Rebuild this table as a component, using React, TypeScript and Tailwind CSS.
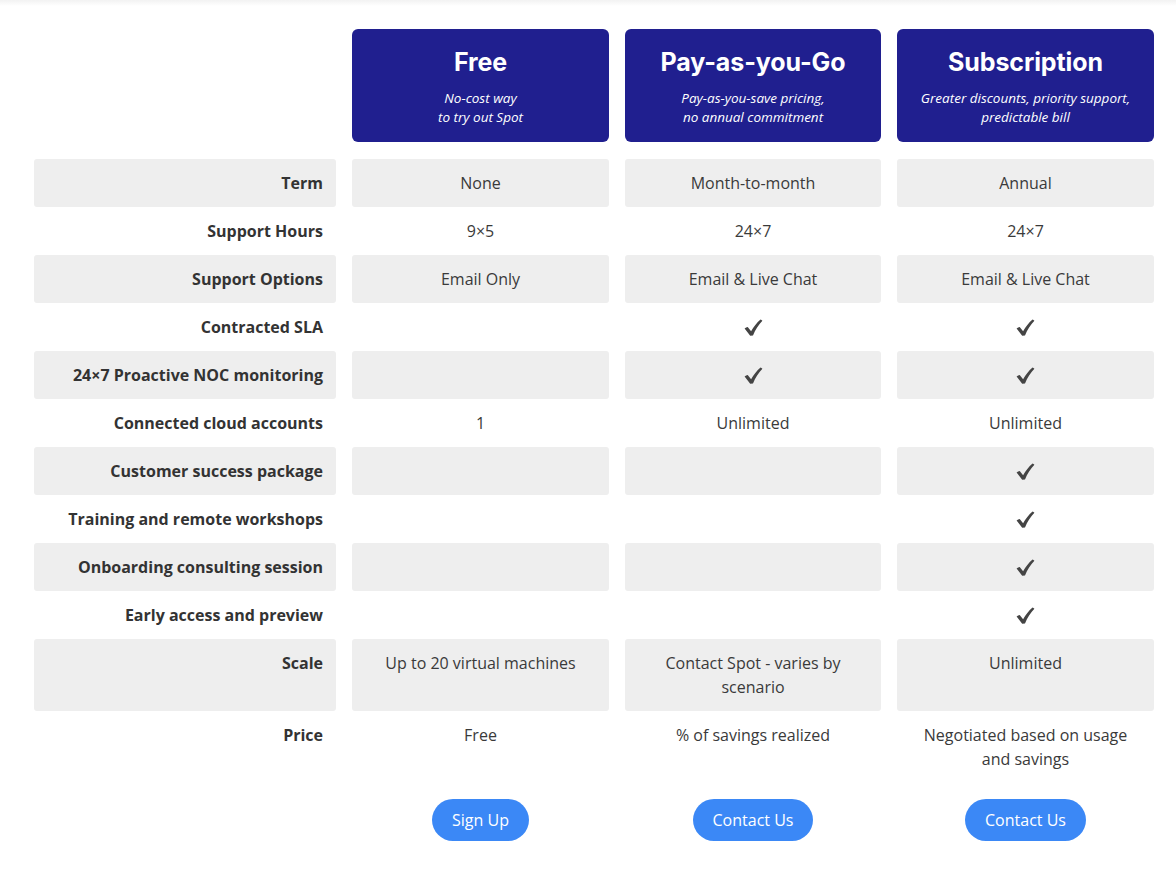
import React from "react";

type Cell = string | boolean;
type Row = { label: string; cells: Cell[]; tall?: boolean };

const rows: Row[] = [
  { label: "Term", cells: ["None", "Month-to-month", "Annual"] },
  { label: "Support Hours", cells: ["9×5", "24×7", "24×7"] },
  { label: "Support Options", cells: ["Email Only", "Email & Live Chat", "Email & Live Chat"] },
  { label: "Contracted SLA", cells: ["", true, true] },
  { label: "24×7 Proactive NOC monitoring", cells: ["", true, true] },
  { label: "Connected cloud accounts", cells: ["1", "Unlimited", "Unlimited"] },
  { label: "Customer success package", cells: ["", "", true] },
  { label: "Training and remote workshops", cells: ["", "", true] },
  { label: "Onboarding consulting session", cells: ["", "", true] },
  { label: "Early access and preview", cells: ["", "", true] },
  { label: "Scale", cells: ["Up to 20 virtual machines", "Contact Spot - varies by scenario", "Unlimited"], tall: true },
  { label: "Price", cells: ["Free", "% of savings realized", "Negotiated based on usage and savings"], tall: true },
];

const plans = [
  { title: "Free", sub: ["No-cost way", "to try out Spot"] },
  { title: "Pay-as-you-Go", sub: ["Pay-as-you-save pricing,", "no annual commitment"] },
  { title: "Subscription", sub: ["Greater discounts, priority support,", "predictable bill"] },
];

function Check() {
  return (
    <svg width="19" height="17" viewBox="0 0 19 17" className="inline-block">
      <path
        d="M0.6 9.5 C1.5 8.7 2.7 8.1 3.7 7.9 L7.1 12.3 C9.6 7.9 12.8 3.7 16.5 0.5 C17.2 0.8 17.9 1.3 18.4 1.8 C14.5 5.9 11.3 10.9 9.0 16.4 L6.2 16.7 Z"
        fill="#444444"
      />
    </svg>
  );
}

export default function App() {
  const font = { fontFamily: '"Open Sans", "Liberation Sans", sans-serif' };
  return (
    <div className="w-[1176px] min-h-[871px] bg-white" style={font}>
      <div className="h-[6px] bg-gradient-to-b from-[#f2f2f2] to-white" />
      <div className="pl-[34px] pr-[22px] pt-[23px]">
        <div className="grid grid-cols-[302px_257px_256px_257px] gap-x-4">
          <div />
          {plans.map((p) => (
            <div
              key={p.title}
              className="h-[113px] rounded-[6px] bg-[#201f8f] text-white text-center pt-[17px] mb-[17px]"
            >
              <div
                className="text-[25px] leading-[32px] font-bold tracking-[-0.1px]"
                style={{ fontFamily: '"Inter", "Lato", sans-serif' }}
              >
                {p.title}
              </div>
              <div className="mt-[11px] text-[13.5px] leading-[19px] italic">
                {p.sub.map((s) => (
                  <div key={s}>{s}</div>
                ))}
              </div>
            </div>
          ))}

          {rows.map((r, i) => {
            const shaded = i % 2 === 0;
            const bg = shaded ? "bg-[#eeeeee]" : "";
            const h = r.tall ? "h-[72px]" : "h-[48px]";
            return (
              <React.Fragment key={r.label}>
                <div
                  className={`${bg} ${h} rounded-[3px] py-3 pr-[13px] text-right text-[16px] leading-6 font-bold text-[#333333]`}
                >
                  {r.label}
                </div>
                {r.cells.map((c, j) => (
                  <div
                    key={j}
                    className={`${bg} ${h} rounded-[3px] py-3 px-4 text-center text-[16px] leading-6 text-[#3a3a3a]`}
                  >
                    {c === true ? (
                      <span className="inline-flex h-6 items-center justify-center">
                        <Check />
                      </span>
                    ) : (
                      c
                    )}
                  </div>
                ))}
              </React.Fragment>
            );
          })}

          <div />
          {["Sign Up", "Contact Us", "Contact Us"].map((b, j) => (
            <div key={j} className="flex justify-center mt-4">
              <button className="h-[42px] rounded-full bg-[#3b88f6] px-5 text-[16px] text-white">
                {b}
              </button>
            </div>
          ))}
        </div>
      </div>
    </div>
  );
}
